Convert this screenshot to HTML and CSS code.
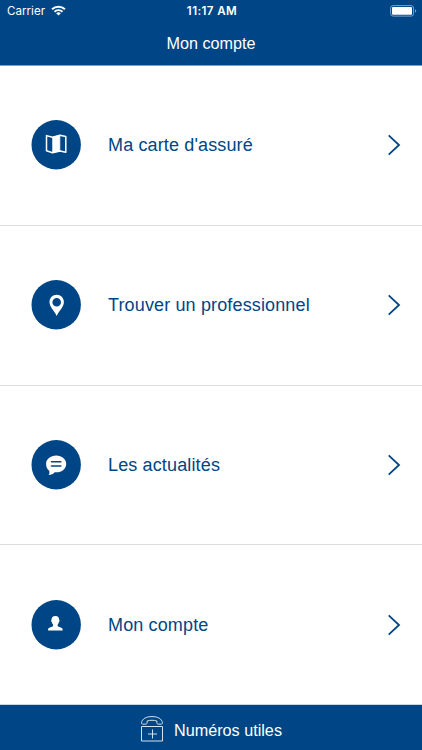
FILE: index.html
```html
<!DOCTYPE html>
<html lang="fr">
<head>
<meta charset="utf-8">
<meta name="viewport" content="width=device-width, initial-scale=1">
<title>Mon compte</title>
<link rel="stylesheet" href="styles.css">
</head>
<body>
<div class="app">
  <header class="header">
    <div class="status">
      <div class="status-left">
        <span class="carrier">Carrier</span>
        <svg class="wifi" width="15" height="11.500" viewBox="0 0 16 12" fill="none" stroke="#fff" stroke-width="2.100">
          <path d="M1.100 4.400C5 .7 11 .7 14.900 4.400M3.700 7.100c2.500-2.200 6.100-2.200 8.600 0"/>
          <path d="M8 11 5.500 8.600c1.500-1.200 3.500-1.200 5 0z" fill="#fff" stroke="none"/>
        </svg>
      </div>
      <span class="time">11:17 AM</span>
      <div class="status-right">
        <svg width="27" height="12" viewBox="0 0 27 12">
          <rect x=".6" y=".6" width="23" height="10.500" rx="2.500" fill="none" stroke="#7d9fc5" stroke-width="1"/>
          <rect x="2" y="2" width="20" height="7.700" rx="1" fill="#fff"/>
          <path d="M25 4.200c1.700.5 1.700 2.800 0 3.300z" fill="#7d9fc5"/>
        </svg>
      </div>
    </div>
    <h1 class="title">Mon compte</h1>
  </header>
  <main class="menu">
    <a class="row">
      <svg class="badge" viewBox="0 0 50 50">
        <circle class="disc" cx="25.200" cy="24.800" r="24.700"/>
        <path d="M15.500 15.600 21.500 17.200 29 15.200 34.800 16.600V32.300L29 31 21.500 32.800 15.500 30.800z" fill="none" stroke="#fff" stroke-width="1.500" stroke-linejoin="round"/>
        <path d="M21.700 17.300 28.800 15.500V31L21.700 32.600z" fill="#fff" stroke="#fff" stroke-width=".8"/>
      </svg>
      <span class="label">Ma carte d'assuré</span>
      <svg class="chevron" viewBox="0 0 14 22"><path d="M1.700 1.300 12 11 1.700 20.700"/></svg>
    </a>
    <a class="row">
      <svg class="badge" viewBox="0 0 50 50">
        <circle class="disc" cx="25.200" cy="24.800" r="24.700"/>
        <path d="M25.700 14.800c-4.100 0-7.200 3.200-7.200 7.200 0 5 4.400 8.200 7.200 13.900 2.800-5.700 7.200-8.900 7.200-13.900 0-4-3.100-7.200-7.200-7.200zm0 3.100a4.300 4.300 0 1 1 0 8.600 4.300 4.300 0 0 1 0-8.600z" fill="#fff" fill-rule="evenodd"/>
      </svg>
      <span class="label">Trouver un professionnel</span>
      <svg class="chevron" viewBox="0 0 14 22"><path d="M1.700 1.300 12 11 1.700 20.700"/></svg>
    </a>
    <a class="row">
      <svg class="badge" viewBox="0 0 50 50">
        <circle class="disc" cx="25.200" cy="24.800" r="24.700"/>
        <path d="M25.200 15.600c5.700 0 10 3.700 10 8.300s-4.300 8.300-10 8.300h-1.400c-1.600 1.800-3.700 2.800-6.200 2.800.8-.9 1-2.200.7-4.100-2-1.700-3.200-4.200-3.200-7 0-4.600 4.400-8.300 10.100-8.300z" fill="#fff"/>
        <path d="M20.500 21.700h9.300M20.500 26h9.300" fill="none" stroke="#004586" stroke-width="1.600" stroke-linecap="round"/>
      </svg>
      <span class="label">Les actualités</span>
      <svg class="chevron" viewBox="0 0 14 22"><path d="M1.700 1.300 12 11 1.700 20.700"/></svg>
    </a>
    <a class="row">
      <svg class="badge" viewBox="0 0 50 50">
        <circle class="disc" cx="25.200" cy="24.800" r="24.700"/>
        <path d="M24.400 15.900c2.500 0 3.900 1.600 3.800 4.100.6.200.5 1.500-.3 2-.2 1.100-.6 1.900-1.200 2.500v1.400c.8 1.100 4.500 1.300 4.900 3.200v1.500H17.100v-1.500c.4-1.900 4.100-2.100 4.900-3.200v-1.400c-.6-.6-1-1.400-1.200-2.500-.8-.5-.9-1.800-.3-2-.1-2.500 1.300-4.100 3.900-4.100z" fill="#fff"/>
      </svg>
      <span class="label">Mon compte</span>
      <svg class="chevron" viewBox="0 0 14 22"><path d="M1.700 1.300 12 11 1.700 20.700"/></svg>
    </a>
  </main>
  <footer class="footer">
    <svg class="phone" width="24" height="28" viewBox="0 0 24 28" fill="none" stroke="#d5e2ef" stroke-width="1">
      <path d="M1.500 11.500H22.500V26H1.500zM12.500 14.500v9M8 19h9"/>
      <path d="M1.500 7.800C2.200 3.700 6.200 1.600 12 1.600s9.800 2.100 10.500 6.200c.1.900-.5 1.300-1.200 1.300h-3.200c-.9 0-1.200-.5-1.200-1.300V6c-3-1-6.800-1-9.800 0v1.800c0 .8-.3 1.300-1.200 1.300H2.700c-.7 0-1.300-.4-1.200-1.300z"/>
    </svg>
    <span class="footer-label">Numéros utiles</span>
  </footer>
</div>
</body>
</html>
```
FILE: styles.css
```css
* { box-sizing: border-box; }
body {
  margin: 0;
  background: #fff;
  font-family: "Liberation Sans", Arial, sans-serif;
  color: #004586;
}
.app {
  width: 422px;
  height: 750px;
  display: flex;
  flex-direction: column;
  overflow: hidden;
}
.header {
  height: 66px;
  flex: none;
  background: #004586;
  border-bottom: 1px solid #7f9fc1;
  color: #fff;
}
.status {
  height: 22px;
  display: grid;
  grid-template-columns: 1fr auto 1fr;
  align-items: center;
  padding: 0 5px 0 7px;
  font-family: Inter, "Liberation Sans", sans-serif;
  font-size: 11.6px;
}
.status-left { display: flex; align-items: center; gap: 5px; }
.carrier { width: 39px; white-space: nowrap; }
.status-right { display: flex; justify-content: flex-end; }
.time { font-weight: 600; letter-spacing: .4px; }
.title {
  margin: 0;
  height: 43px;
  line-height: 43px;
  text-align: center;
  font-size: 16.2px;
  font-weight: 400;
}
.menu {
  flex: none;
  height: 638px;
  display: grid;
  grid-template-rows: 160px 160px 159px 159px;
}
.row {
  display: flex;
  align-items: center;
  padding: 0 21px 1px 31px;
  border-bottom: 1px solid #dcdcdc;
}
.row:last-child { border-bottom: 0; padding-top: 1px; padding-bottom: 0; }
.badge { width: 50px; height: 50px; flex: none; }
.disc { fill: #004586; }
.label {
  flex: 1;
  margin-left: 27px;
  font-size: 18px;
  letter-spacing: .14px;
  line-height: 24px;
  white-space: nowrap;
}
.chevron {
  width: 14px;
  height: 22px;
  fill: none;
  stroke: #004586;
  stroke-width: 1.8;
}
.footer {
  height: 46px;
  flex: none;
  background: #004586;
  border-top: 1px solid #c5d8e8;
  color: #fff;
  display: flex;
  align-items: center;
  justify-content: center;
  gap: 10px;
  padding-top: 4px;
}
.phone { margin-top: -2px; }
.footer-label { font-size: 16.2px; line-height: 24px; }
```
